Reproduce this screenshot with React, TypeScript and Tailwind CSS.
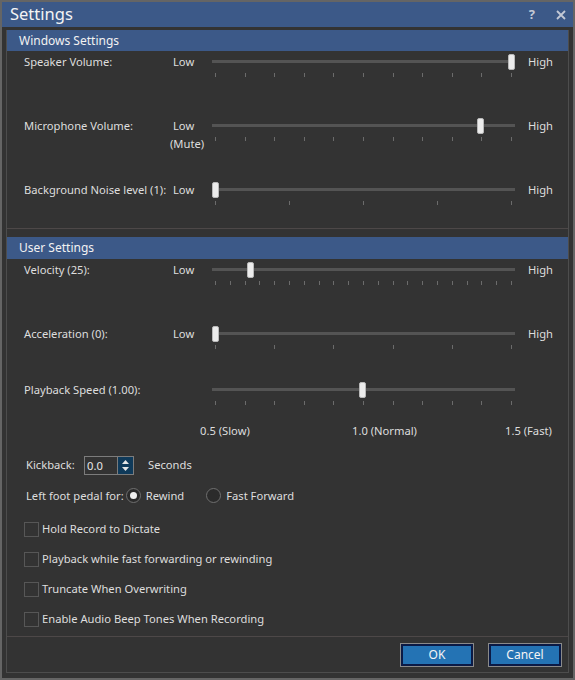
import React from "react";

function Slider({ value, ticks }: { value: number; ticks: number }) {
  return (
    <div className="w-[303px]">
      <div className="relative h-[18px]">
        <div className="absolute left-0 right-0 top-[7px] h-[3px] bg-[#545454]" />
        <div
          className="absolute top-[1px] h-[16px] w-[7px] rounded-[2px] border border-[#b9b9b9] bg-[#ececec]"
          style={{ left: `${Math.round(value * 296)}px` }}
        />
      </div>
      <div className="mt-[2px] flex h-[4px] justify-between px-[3px]">
        {Array.from({ length: ticks }).map((_, i) => (
          <span key={i} className="h-full w-px bg-[#6b6b6b]" />
        ))}
      </div>
    </div>
  );
}

function SliderRow({
  label,
  value,
  ticks,
  height,
  sub,
}: {
  label: string;
  value: number;
  ticks: number;
  height: string;
  sub?: string;
}) {
  return (
    <div className={`grid grid-cols-[149px_39px_303px_1fr] items-start pl-[17px] pt-[2px] leading-[18px] ${height}`}>
      <span className="whitespace-nowrap">{label}</span>
      <div className="flex flex-col">
        <span>Low</span>
        {sub && <span className="-ml-[3px]">{sub}</span>}
      </div>
      <Slider value={value} ticks={ticks} />
      <span className="pl-[13px]">High</span>
    </div>
  );
}

function Header({ title, h }: { title: string; h: string }) {
  return (
    <div className={`${h} flex items-center bg-[#3c5988] pl-[12px] text-[12px] text-[#f2f2f2]`}>{title}</div>
  );
}

function Check({ label }: { label: string }) {
  return (
    <div className="flex h-[20px] items-center gap-[3px] pl-[17px]">
      <span className="h-[15px] w-[15px] border border-[#575757]" />
      <span>{label}</span>
    </div>
  );
}

function Radio({ label, on }: { label: string; on?: boolean }) {
  return (
    <div className="flex items-center gap-[5px]">
      <span className="flex h-[15px] w-[15px] items-center justify-center rounded-full border border-[#6f6f6f] bg-[#2b2b2b]">
        {on && <span className="h-[7px] w-[7px] rounded-full bg-[#f0f0f0]" />}
      </span>
      <span>{label}</span>
    </div>
  );
}

export default function App() {
  return (
    <div className="flex h-[680px] w-[575px] flex-col border-2 border-[#656565] bg-[#333333] font-['Noto_Sans',sans-serif] text-[11.2px] text-[#dedede]">
      {/* Title bar */}
      <div className="flex h-[25px] items-center bg-[#3c5988] pl-[8px] pr-[7px]">
        <span className="text-[16.5px] leading-none text-[#f4f4f4]">Settings</span>
        <span className="ml-auto text-[13px] font-bold leading-none text-[#c3c9d6]">?</span>
        <svg className="ml-[21px]" width="10" height="10" viewBox="0 0 10 10">
          <path d="M1 1L9 9M9 1L1 9" stroke="#c3c9d6" strokeWidth="1.8" />
        </svg>
      </div>

      <div className="mx-[4px] mt-[3px] mb-[5px] flex flex-1 flex-col border-x border-b border-[#4d4d4d]">
        {/* Windows settings */}
        <div className="border-b border-[#4d4848]">
          <Header title="Windows Settings" h="h-[21px]" />
          <SliderRow label="Speaker Volume:" value={1} ticks={11} height="h-[64px]" />
          <SliderRow label="Microphone Volume:" value={0.894} ticks={11} height="h-[64px]" sub="(Mute)" />
          <SliderRow label="Background Noise level (1):" value={0} ticks={5} height="h-[49px]" />
        </div>

        {/* User settings */}
        <div className="mt-[8px] flex flex-1 flex-col border-b border-[#4d4848]">
          <Header title="User Settings" h="h-[22px]" />
          <SliderRow label="Velocity (25):" value={0.118} ticks={21} height="h-[64px]" />
          <SliderRow label="Acceleration (0):" value={0} ticks={6} height="h-[56px]" />
          <div className="grid grid-cols-[188px_303px] items-start pl-[17px] pt-[2px] leading-[18px]">
            <span>Playback Speed (1.00):</span>
            <Slider value={0.497} ticks={11} />
          </div>
          <div className="mt-[17px] flex pl-[193px] leading-[18px]">
            <span className="w-[152px]">0.5 (Slow)</span>
            <span className="w-[153px]">1.0 (Normal)</span>
            <span>1.5 (Fast)</span>
          </div>

          <div className="mt-[16px] flex h-[19px] items-center pl-[19px]">
            <span className="w-[58px]">Kickback:</span>
            <div className="flex h-[19px] border border-[#7c7c7c]">
              <span className="w-[32px] pl-[2px] leading-[17px] text-[#e8e8e8]">0.0</span>
              <div className="flex w-[16px] flex-col items-center justify-center gap-[3px] border-l border-[#7c7c7c] bg-[#0f3a5a]">
                <svg width="7" height="4" viewBox="0 0 7 4">
                  <path d="M0 4L3.5 0L7 4Z" fill="#e6e6e6" />
                </svg>
                <svg width="7" height="4" viewBox="0 0 7 4">
                  <path d="M0 0L3.5 4L7 0Z" fill="#e6e6e6" />
                </svg>
              </div>
            </div>
            <span className="ml-[14px]">Seconds</span>
          </div>

          <div className="mt-[11px] flex h-[20px] items-center gap-[2px] pl-[19px]">
            <span>Left foot pedal for:</span>
            <Radio label="Rewind" on />
            <span className="ml-[20px]">
              <Radio label="Fast Forward" />
            </span>
          </div>

          <div className="mt-[13px] flex flex-col gap-[10px]">
            <Check label="Hold Record to Dictate" />
            <Check label="Playback while fast forwarding or rewinding" />
            <Check label="Truncate When Overwriting" />
            <Check label="Enable Audio Beep Tones When Recording" />
          </div>
        </div>

        {/* Buttons */}
        <div className="flex h-[35px] items-center justify-end gap-[14px] pr-[6px]">
          <button className="h-[24px] w-[74px] border border-[#8a8a8a] bg-[#2473b4] text-[12px] text-[#f4f4f4] shadow-[inset_0_0_0_2px_#0b1a45]">
            OK
          </button>
          <button className="h-[24px] w-[74px] border border-[#8a8a8a] bg-[#2473b4] text-[12px] text-[#f4f4f4] shadow-[inset_0_0_0_2px_#0b1a45]">
            Cancel
          </button>
        </div>
      </div>
    </div>
  );
}
